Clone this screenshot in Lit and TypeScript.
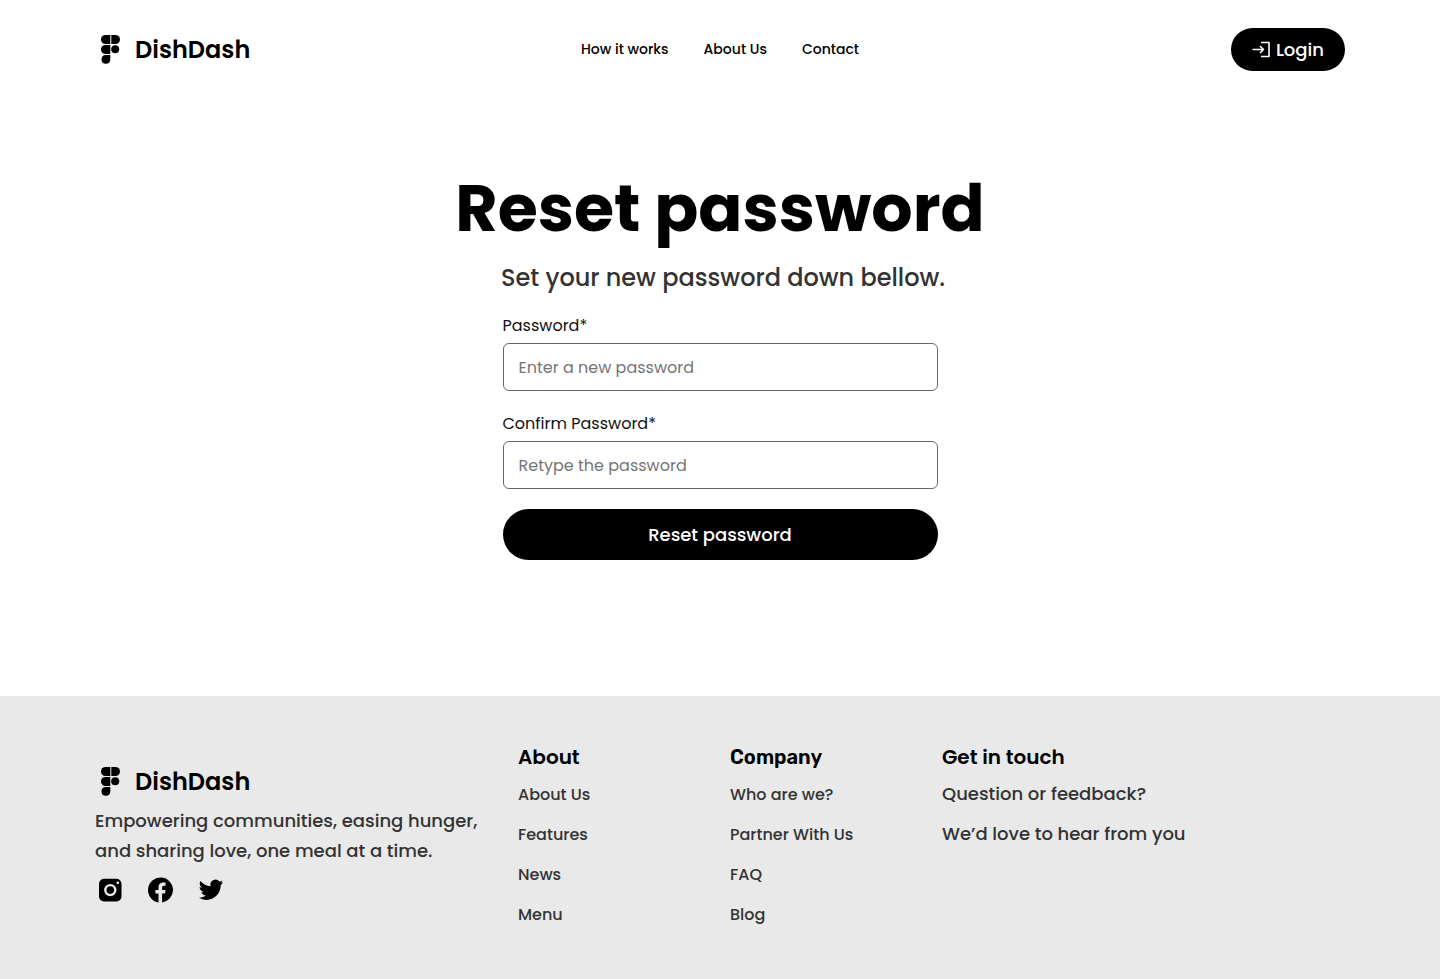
import { LitElement, html, css, svg } from "lit";
import { customElement } from "lit/decorators.js";

const brandMark = svg`
  <path d="M4.500 0H9.300V9H4.500A4.500 4.500 0 0 1 4.500 0Z"/>
  <path d="M10.300 0H14.500A4.500 4.500 0 0 1 14.500 9H10.300Z"/>
  <path d="M4.500 10H9.300V19H4.500A4.500 4.500 0 0 1 4.500 10Z"/>
  <circle cx="14.200" cy="14.200" r="4"/>
  <path d="M4.800 20H9.300V24.600A4.400 4.400 0 1 1 4.800 20Z"/>`;

const socials = [
  {
    name: "Instagram",
    icon: svg`<path fill-rule="evenodd" d="M8.500 2.800H20A5 5 0 0 1 25.500 8V20A5 5 0 0 1 20 25.500H8.500A5 5 0 0 1 3 20V8A5 5 0 0 1 8.500 2.800ZM14.300 7.900A6.200 6.200 0 1 0 14.300 20.300A6.200 6.200 0 1 0 14.300 7.900ZM14.300 10.300A3.800 3.800 0 1 1 14.300 17.900A3.800 3.800 0 1 1 14.300 10.300ZM21.800 5.400A1.400 1.400 0 1 0 21.800 8.200A1.400 1.400 0 1 0 21.800 5.400Z"/>`,
  },
  {
    name: "Facebook",
    icon: svg`<path d="M27 14A12.500 12.500 0 1 0 12.500 26.400V17.600H9.400V14H12.500V11.300C12.500 8.100 14.400 6.400 17.300 6.400C18.600 6.400 19.500 6.600 19.500 6.600V9.800H18.100C16.500 9.800 16.100 10.700 16.100 11.700V14H19.500L19 17.600H16.100V26.400A12.500 12.500 0 0 0 27 14Z"/>`,
  },
  {
    name: "Twitter",
    icon: svg`<path d="M27.200 6.300C26.300 6.700 25.400 7 24.400 7.100C25.400 6.500 26.200 5.500 26.500 4.400C25.600 5 24.500 5.400 23.400 5.600A5 5 0 0 0 14.700 10.200C10.600 10 6.900 8 4.400 4.900A5 5 0 0 0 5.900 11.600C5.100 11.600 4.300 11.300 3.600 11V11.100C3.600 13.500 5.300 15.500 7.600 16A5 5 0 0 1 5.400 16.100A5 5 0 0 0 10 19.600A10 10 0 0 1 2.700 21.600A14 14 0 0 0 10.300 23.900C19.500 23.900 24.700 16.200 24.700 9.500V8.900C25.700 8.200 26.500 7.300 27.200 6.300Z"/>`,
  },
];

@customElement("app-root")
export class AppRoot extends LitElement {
  static styles = css`
    :host {
      display: flex;
      flex-direction: column;
      min-height: 100vh;
      background: #fff;
      color: #000;
      font-family: Poppins, Inter, sans-serif;
      font-size: 16px;
      line-height: 24px;
    }
    * { box-sizing: border-box; }
    a { color: inherit; text-decoration: none; }
    h1, h2, p, ul { margin: 0; padding: 0; }
    ul { list-style: none; }
    .header {
      display: grid;
      grid-template-columns: 1fr auto 1fr;
      align-items: center;
      padding: 28px 95px;
    }
    .brand {
      display: flex;
      align-items: center;
      gap: 15px;
      padding-left: 6px;
      font-size: 24px;
      line-height: 36px;
      font-weight: 600;
    }
    .brand svg { width: 19px; height: 29px; }
    .nav { display: flex; gap: 35px; font-size: 14px; line-height: 21px; font-weight: 500; }
    .login {
      justify-self: end;
      display: flex;
      align-items: center;
      gap: 4px;
      padding: 8px 21px;
      border-radius: 22px;
      background: #000;
      color: #fff;
      font-size: 18px;
      line-height: 27px;
      font-weight: 500;
    }
    .login svg { width: 20px; height: 20px; }
    .main {
      flex: 1;
      display: flex;
      flex-direction: column;
      align-items: center;
      padding: 61px 20px 136px;
    }
    .title { font-size: 65px; line-height: 98px; font-weight: 700; text-align: center; }
    .lead {
      padding-left: 6px;
      margin-top: 2px;
      font-size: 24px;
      line-height: 36px;
      font-weight: 500;
      color: #333;
      text-align: center;
    }
    .form { display: flex; flex-direction: column; gap: 20px; width: 100%; max-width: 435px; margin-top: 17px; }
    .field { display: flex; flex-direction: column; gap: 5px; color: #111; }
    .label { padding-top: 1px; }
    .input {
      width: 100%;
      height: 48px;
      padding: 0 15px;
      border: 1px solid #666;
      border-radius: 6px;
      background: #fff;
      font: inherit;
    }
    .input::placeholder { color: #757575; opacity: 1; }
    .submit {
      height: 51px;
      border: 0;
      border-radius: 26px;
      background: #000;
      color: #fff;
      font: inherit;
      font-size: 18px;
      font-weight: 500;
    }
    .footer {
      display: grid;
      grid-template-columns: 423fr 212fr 212fr 403fr;
      padding: 46px 95px 52px;
      background: #e9e9e9;
      color: #333;
      font-weight: 500;
    }
    .about { align-self: center; padding-bottom: 2px; }
    .about .brand { color: #000; }
    .tagline { margin-top: 6px; font-size: 18px; line-height: 30px; }
    .socials { display: flex; gap: 22px; margin-top: 10px; padding-left: 1px; color: #000; }
    .socials svg { display: block; width: 28px; height: 28px; }
    .heading { margin-bottom: 11px; font-size: 20px; line-height: 30px; font-weight: 600; color: #000; }
    .heading.alt { font-family: Rubik, Poppins, sans-serif; }
    .links { display: flex; flex-direction: column; gap: 16px; }
    .contact .heading { margin-bottom: 10px; }
    .contact .links { font-size: 18px; }
  `;

  private brand() {
    return html`<a class="brand" href="#"><svg viewBox="0 0 19 29" aria-hidden="true">${brandMark}</svg>DishDash</a>`;
  }

  private column(title: string, items: string[], alt = false) {
    return html`<nav aria-label=${title}>
      <h2 class="heading ${alt ? "alt" : ""}">${title}</h2>
      <ul class="links">${items.map((item) => html`<li><a href="#">${item}</a></li>`)}</ul>
    </nav>`;
  }

  render() {
    return html`
      <header class="header">
        ${this.brand()}
        <nav class="nav" aria-label="Main">
          <a href="#">How it works</a><a href="#">About Us</a><a href="#">Contact</a>
        </nav>
        <a class="login" href="#">
          <svg viewBox="0 0 20 20" fill="none" stroke="currentColor" stroke-width="1.6" aria-hidden="true">
            <path d="M9 2.500H17V16.500H9M0.500 9.500H11M8 6L11.500 9.500L8 13" stroke-linejoin="round"/>
          </svg>Login</a>
      </header>
      <main class="main">
        <h1 class="title">Reset password</h1>
        <p class="lead">Set your new password down bellow.</p>
        <form class="form" @submit=${(e: Event) => e.preventDefault()}>
          <div class="field">
            <label class="label" for="password">Password*</label>
            <input class="input" id="password" type="password" placeholder="Enter a new password" />
          </div>
          <div class="field">
            <label class="label" for="confirm">Confirm Password*</label>
            <input class="input" id="confirm" type="password" placeholder="Retype the password" />
          </div>
          <button class="submit" type="submit">Reset password</button>
        </form>
      </main>
      <footer class="footer">
        <section class="about">
          ${this.brand()}
          <p class="tagline">Empowering communities, easing hunger,<br />and sharing love, one meal at a time.</p>
          <div class="socials">
            ${socials.map((s) => html`<a href="#" aria-label=${s.name}><svg viewBox="0 0 28 28" fill="currentColor" aria-hidden="true">${s.icon}</svg></a>`)}
          </div>
        </section>
        ${this.column("About", ["About Us", "Features", "News", "Menu"])}
        ${this.column("Company", ["Who are we?", "Partner With Us", "FAQ", "Blog"], true)}
        <section class="contact">
          <h2 class="heading">Get in touch</h2>
          <div class="links"><p>Question or feedback?</p><p>We’d love to hear from you</p></div>
        </section>
      </footer>
    `;
  }
}
